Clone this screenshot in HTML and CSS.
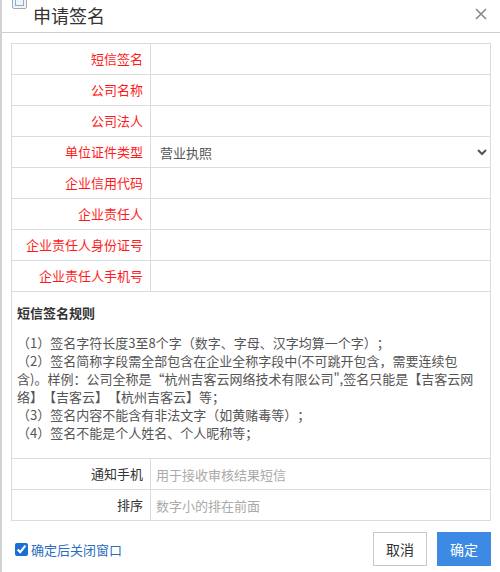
FILE: index.html
```html
<!DOCTYPE html>
<html lang="zh-CN">
<head>
<meta charset="utf-8">
<title>申请签名</title>
<link rel="stylesheet" href="styles.css">
</head>
<body>
<div class="dialog">
  <div class="header">
    <span class="app-icon"><span class="app-icon-inner"></span></span>
    <span class="title">申请签名</span>
    <svg class="close" width="12" height="12" viewBox="0 0 12 12"><path d="M1 1 L11 11 M11 1 L1 11" stroke="#8a8a8a" stroke-width="1.6" fill="none"/></svg>
  </div>
  <div class="body">
    <table class="form">
      <tr><td class="label req">短信签名</td><td class="field"><input class="inp" type="text"></td></tr>
      <tr><td class="label req">公司名称</td><td class="field"><input class="inp" type="text"></td></tr>
      <tr><td class="label req">公司法人</td><td class="field"><input class="inp" type="text"></td></tr>
      <tr><td class="label req">单位证件类型</td><td class="field"><select class="sel"><option>营业执照</option></select></td></tr>
      <tr><td class="label req">企业信用代码</td><td class="field"><input class="inp" type="text"></td></tr>
      <tr><td class="label req">企业责任人</td><td class="field"><input class="inp" type="text"></td></tr>
      <tr><td class="label req">企业责任人身份证号</td><td class="field"><input class="inp" type="text"></td></tr>
      <tr><td class="label req">企业责任人手机号</td><td class="field"><input class="inp" type="text"></td></tr>
      <tr><td class="rules" colspan="2">
        <div class="rules-title">短信签名规则</div>
        <div class="rules-text">（1）签名字符长度3至8个字（数字、字母、汉字均算一个字）；<br>（2）签名简称字段需全部包含在企业全称字段中(不可跳开包含，需要连续包含)。样例：公司全称是“杭州吉客云网络技术有限公司",签名只能是【吉客云网络】【吉客云】【杭州吉客云】等；<br>（3）签名内容不能含有非法文字（如黄赌毒等）；<br>（4）签名不能是个人姓名、个人昵称等；</div>
      </td></tr>
      <tr><td class="label">通知手机</td><td class="field"><input class="inp" type="text" placeholder="用于接收审核结果短信"></td></tr>
      <tr><td class="label">排序</td><td class="field"><input class="inp" type="text" placeholder="数字小的排在前面"></td></tr>
    </table>
  </div>
  <div class="footer">
    <label class="chk"><input type="checkbox" checked><span>确定后关闭窗口</span></label>
    <div class="btns">
      <button class="btn btn-cancel">取消</button>
      <button class="btn btn-ok">确定</button>
    </div>
  </div>
</div>
</body>
</html>
```

FILE: styles.css
```css
* { box-sizing: border-box; }
html, body { margin: 0; padding: 0; background: #fff; }
body {
  font-family: "Noto Sans CJK SC", "Microsoft YaHei", sans-serif;
  font-size: 13px;
  color: #333;
}
.dialog {
  width: 500px;
  height: 572px;
  border-left: 2px solid #d2d2d2;
  overflow: hidden;
}
.header {
  height: 33px;
  border-bottom: 1px solid #cfcfcf;
  display: flex;
  align-items: flex-start;
  padding-left: 10px;
  position: relative;
}
.app-icon {
  width: 15px;
  height: 15px;
  margin-top: -6px;
  border: 1px solid #a8a8a8;
  border-radius: 2px;
  background: #f4f4f4;
  display: flex;
  align-items: center;
  justify-content: center;
}
.app-icon-inner {
  width: 9px;
  height: 9px;
  border: 1px solid #7fb2e0;
}
.title {
  font-size: 18px;
  line-height: 30px;
  margin-left: 6px;
  color: #333;
}
.close {
  position: absolute;
  right: 13px;
  top: 8px;
}
.body {
  padding: 10px 9px 0 9px;
}
.form {
  width: 480px;
  border-collapse: collapse;
  table-layout: fixed;
}
.form td {
  border: 1px solid #dcdcdc;
  padding: 0;
  height: 31px;
  line-height: 30px;
}
.label {
  width: 139px;
  text-align: right;
  padding-right: 7px !important;
  color: #333;
  white-space: nowrap;
}
.label.req { color: #ff1a1a; }
.field { padding: 0; }
.inp {
  display: block;
  width: 100%;
  height: 30px;
  border: none;
  outline: none;
  padding: 0 5px;
  font-family: inherit;
  font-size: 13px;
  color: #555;
  background: transparent;
}
.inp::placeholder { color: #aaa; }
.sel {
  display: block;
  width: 100%;
  height: 30px;
  border: none;
  outline: none;
  padding: 0 0 0 5px;
  font-family: inherit;
  font-size: 13px;
  color: #555;
  background: #fff;
}
.form td.rules {
  height: 167px;
  line-height: 18px;
  padding: 12px 5px 16px 5px;
  vertical-align: top;
}
.rules-title {
  font-weight: bold;
  color: #333;
  margin-bottom: 12px;
}
.rules-text {
  color: #555;
  text-spacing-trim: space-all;
}
.footer {
  display: flex;
  align-items: center;
  justify-content: space-between;
  padding: 11px 9px 0 9px;
}
.chk {
  display: flex;
  align-items: center;
  color: #2a6ebb;
  font-size: 13px;
}
.chk input {
  width: 13px;
  height: 13px;
  margin: 0 3px 0 4px;
  accent-color: #1b6ed3;
}
.btns { display: flex; gap: 10px; }
.btn {
  width: 54px;
  height: 34px;
  font-family: inherit;
  font-size: 14px;
  padding: 0;
  cursor: pointer;
}
.btn-cancel {
  background: #fff;
  border: 1px solid #c8c8c8;
  color: #333;
}
.btn-ok {
  background: #3d8ae5;
  border: 1px solid #3d8ae5;
  color: #fff;
}
```
